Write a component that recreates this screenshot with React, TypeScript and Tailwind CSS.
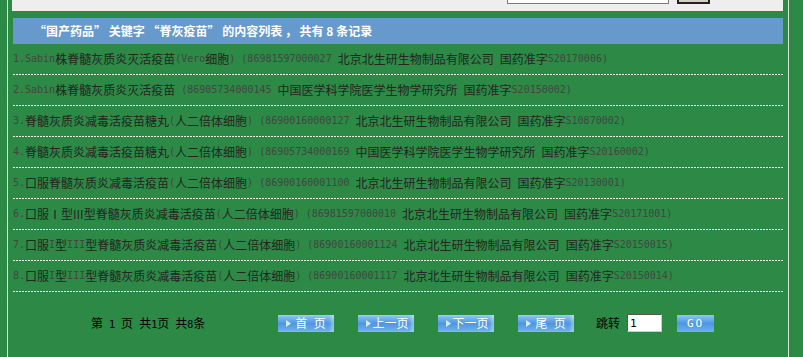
import React from 'react'

const rows = [
  { text: '1.Sabin株脊髓灰质炎灭活疫苗(Vero细胞) (86981597000027 北京北生研生物制品有限公司 国药准字S20170006)' },
  { text: '2.Sabin株脊髓灰质炎灭活疫苗 (86905734000145 中国医学科学院医学生物学研究所 国药准字S20150002)' },
  { text: '3.脊髓灰质炎减毒活疫苗糖丸(人二倍体细胞) (86900160000127 北京北生研生物制品有限公司 国药准字S10870002)' },
  { text: '4.脊髓灰质炎减毒活疫苗糖丸(人二倍体细胞) (86905734000169 中国医学科学院医学生物学研究所 国药准字S20160002)' },
  { text: '5.口服脊髓灰质炎减毒活疫苗(人二倍体细胞) (86900160001100 北京北生研生物制品有限公司 国药准字S20130001)' },
  { text: '6.口服Ⅰ型III型脊髓灰质炎减毒活疫苗(人二倍体细胞) (86981597000010 北京北生研生物制品有限公司 国药准字S20171001)', cjk: ['III'] },
  { text: '7.口服I型III型脊髓灰质炎减毒活疫苗(人二倍体细胞) (86900160001124 北京北生研生物制品有限公司 国药准字S20150015)' },
  { text: '8.口服I型III型脊髓灰质炎减毒活疫苗(人二倍体细胞) (86900160001117 北京北生研生物制品有限公司 国药准字S20150014)' },
]

// ascii runs get the small fixed-width face, like the old SimSun page
function Mixed({ text, cjk = [], dark = false }: { text: string; cjk?: string[]; dark?: boolean }) {
  const parts = text.split(/([\x20-\x7e]+)/).filter((p) => p !== '')
  return (
    <>
      {parts.map((p, i) =>
        /^[\x20-\x7e]+$/.test(p) && !cjk.includes(p) ? (
          <span
            key={i}
            className={
              "whitespace-pre font-['DejaVu_Sans_Mono',monospace] text-[10px] " +
              (dark ? 'text-black' : 'text-[#3f4840]')
            }
          >
            {p}
          </span>
        ) : (
          <span key={i} className={dark ? 'text-black' : 'text-[#232623]'}>
            {p}
          </span>
        )
      )}
    </>
  )
}

function Tri() {
  return (
    <svg width="5" height="7" viewBox="0 0 5 7" className="shrink-0">
      <polygon points="0,0 5,3.5 0,7" fill="#d6ecff" />
    </svg>
  )
}

function PageBtn({ label }: { label: string }) {
  return (
    <div className="flex h-[17px] w-[56px] shrink-0 items-center bg-gradient-to-b from-[#8ec6f6] via-[#4d97e2] to-[#6eb0ee] pl-[8px] pr-[4px] shadow-[inset_-3px_0_3px_rgba(255,255,255,0.35)]">
      <Tri />
      <span className="flex-1 text-center text-[12px] leading-none text-white [word-spacing:4px]">{label}</span>
    </div>
  )
}

function Dashes() {
  return <div className="h-px w-full bg-[linear-gradient(to_right,#eef4ee_2px,transparent_2px)] bg-[length:3px_1px]" />
}

export default function App() {
  return (
    <div className="min-h-[357px] w-[803px] overflow-hidden bg-[#2d8946] font-['Noto_Sans_CJK_SC',sans-serif]">
      <div className="ml-[7px] min-h-[357px] w-[782px] border-x border-[#d6e6d6] px-[4px]">
        {/* search box, scrolled mostly out of view */}
        <div className="flex h-[11px] w-[771px] items-end overflow-hidden bg-[#eeeeee] pb-[7px]">
          <div className="ml-[495px] h-[20px] w-[162px] shrink-0 border border-[#7a7a7a] bg-white" />
          <div className="ml-[8px] h-[20px] w-[33px] shrink-0 border-2 border-[#222] bg-[#d4d0c8]" />
        </div>

        <div className="ml-px mt-[7px] flex h-[26px] w-[770px] items-center bg-[#6699cc] pl-[21px] text-[12px] font-bold leading-none text-white">
          “国产药品” 关键字 “脊灰疫苗” 的内容列表 ， 共有 8 条记录
        </div>

        <div className="ml-px w-[770px]">
          {rows.map((r, i) => (
            <div key={i}>
              <div className="flex h-[30px] items-center whitespace-nowrap text-[12px] leading-none">
                <Mixed text={r.text} cjk={r.cjk} />
              </div>
              <Dashes />
            </div>
          ))}
        </div>

        <div className="ml-px mt-[22px] flex h-[18px] items-center text-[12px] leading-none">
          <div className="w-[265px] shrink-0 pl-[78px] whitespace-pre">
            <Mixed text="第 1 页 共1页 共8条" dark />
          </div>
          <PageBtn label="首 页" />
          <div className="ml-[24px]"><PageBtn label="上一页" /></div>
          <div className="ml-[24px]"><PageBtn label="下一页" /></div>
          <div className="ml-[24px]"><PageBtn label="尾 页" /></div>
          <span className="ml-[22px] text-black">跳转</span>
          <div className="ml-[7px] flex h-[18px] w-[35px] items-center border border-t-[#555] border-l-[#555] border-r-[#ccc] border-b-[#ccc] bg-white pl-[2px] font-['DejaVu_Sans_Mono',monospace] text-[11px] text-black">
            1
          </div>
          <div className="ml-[15px] flex h-[17px] w-[37px] items-center justify-center bg-gradient-to-b from-[#8ec6f6] via-[#4d97e2] to-[#6eb0ee] font-['DejaVu_Sans_Mono',monospace] text-[11px] tracking-[2px] text-white">
            GO
          </div>
        </div>
      </div>
    </div>
  )
}
